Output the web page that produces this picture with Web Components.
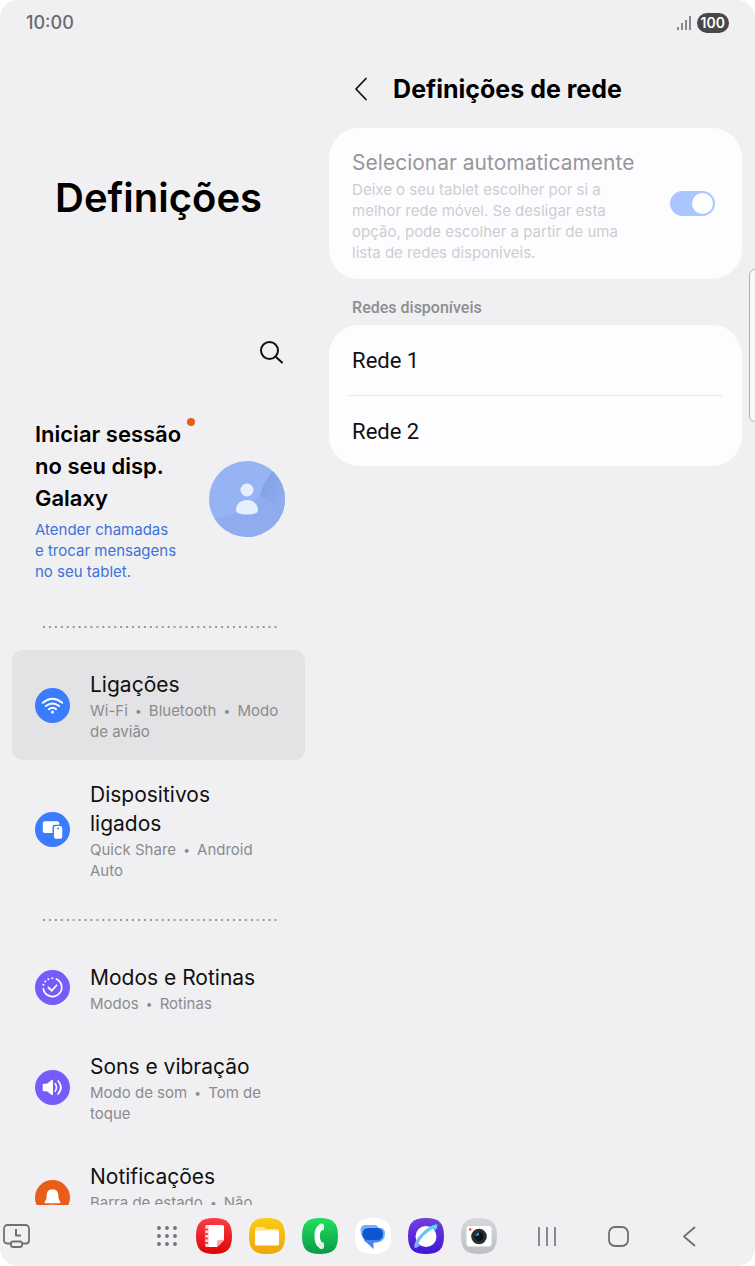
<!DOCTYPE html>
<html lang="pt">
<head>
    <meta charset="UTF-8">
    <meta name="viewport" content="width=device-width, initial-scale=1.0">
    <title>Definições de rede</title>
    <style>
        body{
            margin: 0;
            background-color: #fff;
            font-family: Inter, "Liberation Sans", sans-serif;
        }
    </style>
</head>
<body>

    <tablet-screen>
        <status-bar slot="status" level="100">10:00</status-bar>

        <settings-menu slot="menu" heading="Definições">
            <account-card>
                Iniciar sessão<br>no seu disp.<br>Galaxy
                <span slot="hint">Atender chamadas<br>e trocar mensagens<br>no seu tablet.</span>
            </account-card>
            <dotted-line></dotted-line>
            <menu-item icon="wifi" color="#3b7cff" active>
                Ligações
                <span slot="sub">Wi-Fi<bullet-mark></bullet-mark>Bluetooth<bullet-mark></bullet-mark>Modo<br>de avião</span>
            </menu-item>
            <menu-item icon="devices" color="#3b7cff">
                Dispositivos<br>ligados
                <span slot="sub">Quick Share<bullet-mark></bullet-mark>Android<br>Auto</span>
            </menu-item>
            <dotted-line></dotted-line>
            <menu-item icon="modes" color="#755cfb">
                Modos e Rotinas
                <span slot="sub">Modos<bullet-mark></bullet-mark>Rotinas</span>
            </menu-item>
            <menu-item icon="sound" color="#755cfb">
                Sons e vibração
                <span slot="sub">Modo de som<bullet-mark></bullet-mark>Tom de<br>toque</span>
            </menu-item>
            <menu-item icon="bell" color="#e85d17">
                Notificações
                <span slot="sub">Barra de estado<bullet-mark></bullet-mark>Não<br>incomodar</span>
            </menu-item>
        </settings-menu>

        <detail-pane slot="detail" heading="Definições de rede">
            <auto-select>
                Selecionar automaticamente
                <span slot="hint">Deixe o seu tablet escolher por si a<br>melhor rede móvel. Se desligar esta<br>opção, pode escolher a partir de uma<br>lista de redes disponíveis.</span>
            </auto-select>
            <network-list heading="Redes disponíveis">
                <network-row>Rede 1</network-row>
                <network-row>Rede 2</network-row>
            </network-list>
        </detail-pane>

        <task-bar slot="taskbar"></task-bar>
    </tablet-screen>

    <script>
        const icons = {
            wifi: `<svg viewBox="0 0 36 36" fill="none" stroke="#fff" stroke-width="2" stroke-linecap="round">
                <path d="M8 15.200Q18 7 28 15.200M11.200 18.600Q18 13.200 24.800 18.600M14.300 21.800Q18 19 21.700 21.800"/>
                <circle cx="18" cy="24.800" r="1.600" fill="#fff" stroke="none"/></svg>`,
            devices: `<svg viewBox="0 0 36 36" fill="#fff">
                <path d="M10 9.500h13a2 2 0 0 1 2 2v1.500h-4.500a2.500 2.500 0 0 0-2.500 2.500v6h-8a2 2 0 0 1-2-2v-8a2 2 0 0 1 2-2z"/>
                <rect x="19.500" y="14.500" width="8.500" height="13" rx="2"/><circle cx="23.700" cy="17" r="1" fill="#3b7cff"/></svg>`,
            modes: `<svg viewBox="0 0 36 36" fill="none" stroke="#fff" stroke-width="1.800" stroke-linecap="round">
                <path d="M22 9.200A9.500 9.500 0 1 1 8.600 19.500M13.800 18l3.400 3.300 5-5.600"/>
                <path d="M8.700 15.200v0M10.600 11.800v0M13.800 9.500v0M17.800 8.500v0" stroke-width="2.200"/></svg>`,
            sound: `<svg viewBox="0 0 36 36" fill="none" stroke="#fff" stroke-width="1.700" stroke-linecap="round">
                <path d="M8.700 14.800h4l5-4v14.400l-5-4h-4z" fill="#fff" stroke-linejoin="round" stroke-width="1.500"/>
                <path d="M20.800 14.200Q23.400 18 20.800 21.800"/><path d="M23.800 11.300Q29.600 18 23.800 24.700"/></svg>`,
            bell: `<svg viewBox="0 0 36 36" fill="#fff">
                <path d="M18 9.500c-4.200 0-6 3-6 6.500 0 4-1.300 5-2 6.500-.4 1 0 1.500 1 1.500h14c1 0 1.400-.5 1-1.500-.7-1.500-2-2.500-2-6.500 0-3.500-1.800-6.500-6-6.500z"/>
                <path d="M15 25.500h6q-.8 2.500-3 2.500t-3-2.500z"/></svg>`
        };

        // every component only differs in its template
        class BaseElement extends HTMLElement
        {
            connectedCallback()
            {
                if (this.shadowRoot) return;
                const shadow = this.attachShadow({mode:'open'})
                const template = document.createElement('template')
                template.innerHTML = `<style>*{box-sizing:border-box}</style>` + this.render()
                shadow.append(template.content.cloneNode(true))
            }
        }

        class TabletScreen extends BaseElement
        {
            render()
            {
                return `
                <style>
                    :host{
                        display: flex;
                        flex-direction: column;
                        height: 100vh;
                        overflow: hidden;
                        position: relative;
                        background-color: #f0f0f3;
                        border-radius: 18px;
                    }
                    .panes{
                        flex: 1;
                        min-height: 0;
                        overflow: hidden;
                        display: grid;
                        grid-template-columns: 42fr 58fr;
                    }
                    .handle{
                        position: absolute;
                        top: 269px;
                        right: -6px;
                        width: 12px;
                        height: 153px;
                        border: 1px solid #b4b4b8;
                        border-radius: 6px;
                        background-color: #f7f7f9;
                    }
                </style>
                <slot name="status"></slot>
                <div class="panes">
                    <slot name="menu"></slot>
                    <slot name="detail"></slot>
                </div>
                <slot name="taskbar"></slot>
                <div class="handle"></div>`;
            }
        }

        class StatusBar extends BaseElement
        {
            render()
            {
                return `
                <style>
                    :host{
                        display: flex;
                        align-items: center;
                        gap: 5px;
                        height: 45px;
                        padding: 0 26px;
                        font-size: 18px;
                        font-weight: 500;
                        color: #6a6a6c;
                    }
                    svg{ margin-left: auto; width: 15px; height: 16px; }
                    b{
                        padding: 0 4px;
                        border-radius: 10px;
                        background-color: #48484a;
                        color: #fff;
                        font-size: 14px;
                        font-weight: 600;
                        line-height: 20px;
                    }
                </style>
                <span><slot></slot></span>
                <svg viewBox="0 0 15 16" fill="#8a8a8c">
                    <rect x="0" y="12" width="2" height="3"/><rect x="4" y="8" width="2" height="7"/>
                    <rect x="8" y="5" width="2" height="10"/><rect x="12" y="1" width="2" height="14"/>
                </svg>
                <b>${this.getAttribute('level')}</b>`;
            }
        }

        class SettingsMenu extends BaseElement
        {
            render()
            {
                return `
                <style>
                    :host{ display: block; padding: 0 12px; }
                    h1{
                        margin: 0;
                        padding-top: 128px;
                        text-align: center;
                        font-size: 40px;
                        font-weight: 600;
                        line-height: 50px;
                    }
                    .tools{
                        display: flex;
                        justify-content: flex-end;
                        padding: 110px 15px 47px;
                    }
                    button{
                        padding: 5px;
                        border: 0;
                        background: none;
                        line-height: 0;
                    }
                    nav{ display: block; }
                </style>
                <h1>${this.getAttribute('heading')}</h1>
                <div class="tools">
                    <button aria-label="Pesquisar">
                        <svg width="28" height="28" viewBox="0 0 28 28" fill="none" stroke="#111" stroke-width="2" stroke-linecap="round">
                            <circle cx="12.500" cy="12.500" r="8.500"/><path d="M19 19l6 5.500"/>
                        </svg>
                    </button>
                </div>
                <nav><slot></slot></nav>`;
            }
        }

        class AccountCard extends BaseElement
        {
            render()
            {
                return `
                <style>
                    :host{
                        display: flex;
                        align-items: center;
                        justify-content: space-between;
                        padding: 0 20px 0 23px;
                    }
                    .text{ position: relative; }
                    .name{
                        font-size: 22px;
                        font-weight: 600;
                        line-height: 32px;
                    }
                    .hint{
                        padding-top: 5px;
                        font-size: 15px;
                        line-height: 21px;
                        color: #3d72d8;
                    }
                    .badge{
                        position: absolute;
                        top: 0;
                        right: -14px;
                        width: 8px;
                        height: 8px;
                        border-radius: 50%;
                        background-color: #e2601c;
                    }
                    svg{ flex: none; margin-bottom: 2px; }
                </style>
                <div class="text">
                    <div class="name"><slot></slot></div>
                    <div class="hint"><slot name="hint"></slot></div>
                    <i class="badge"></i>
                </div>
                <svg width="76" height="76" viewBox="0 0 76 76">
                    <defs>
                        <clipPath id="round"><circle cx="38" cy="38" r="38"/></clipPath>
                        <linearGradient id="fold" x1="0" y1="0" x2="1" y2="1">
                            <stop offset="0" stop-color="#7f9fe4"/><stop offset="1" stop-color="#92aff0"/>
                        </linearGradient>
                    </defs>
                    <g clip-path="url(#round)">
                        <rect width="76" height="76" fill="#96b4f3"/>
                        <path d="M0 58Q30 56 51 34L76 50V76H0z" fill="#8eacee"/>
                        <path d="M51 34Q55 20 64 10L76 14V52z" fill="url(#fold)"/>
                    </g>
                    <circle cx="38" cy="29" r="6.500" fill="#e6effe"/>
                    <path d="M27 49c0-6 5-10 11-10s11 4 11 10c0 3-4 4.500-11 4.500s-11-1.500-11-4.500z" fill="#e6effe"/>
                </svg>`;
            }
        }

        class DottedLine extends BaseElement
        {
            render()
            {
                return `
                <style>
                    :host{ display: block; padding: 20px 26px 22px 29px; }
                    :host(:first-of-type){ padding-top: 44px; }
                    div{
                        height: 2px;
                        background: radial-gradient(circle, #98989b 1px, transparent 1px) 0 0 / 6px 2px round;
                    }
                </style>
                <div></div>`;
            }
        }

        class BulletMark extends BaseElement
        {
            render()
            {
                return `
                <style>
                    :host{
                        display: inline-block;
                        width: 21px;
                        text-align: center;
                        font-size: 12px;
                        line-height: 1;
                        vertical-align: 1px;
                    }
                </style>•`;
            }
        }

        class MenuItem extends BaseElement
        {
            render()
            {
                return `
                <style>
                    :host{ display: block; }
                    a{
                        display: flex;
                        align-items: center;
                        gap: 20px;
                        padding: 18px 0 18px 23px;
                        border-radius: 10px;
                        color: #111;
                        text-decoration: none;
                        white-space: nowrap;
                    }
                    :host([active]) a{ background-color: #e3e3e5; }
                    .icon{
                        flex: none;
                        width: 35px;
                        height: 35px;
                        border-radius: 50%;
                        background-color: ${this.getAttribute('color')};
                    }
                    .icon svg{ display: block; }
                    .title{ padding-top: 2px; font-size: 21px; line-height: 29px; }
                    .sub{
                        padding-top: 1px;
                        font-size: 15px;
                        line-height: 21px;
                        color: #8b8b8e;
                    }
                </style>
                <a href="#${this.getAttribute('icon')}">
                    <span class="icon">${icons[this.getAttribute('icon')]}</span>
                    <div>
                        <div class="title"><slot></slot></div>
                        <div class="sub"><slot name="sub"></slot></div>
                    </div>
                </a>`;
            }
        }

        class DetailPane extends BaseElement
        {
            render()
            {
                return `
                <style>
                    :host{ display: block; padding: 0 13px 0 12px; }
                    header{
                        display: flex;
                        align-items: center;
                        gap: 20px;
                        padding: 28px 20px 23px;
                    }
                    button{
                        padding: 0;
                        border: 0;
                        background: none;
                        line-height: 0;
                    }
                    h2{
                        margin: 0;
                        font-size: 25px;
                        font-weight: 700;
                        line-height: 32px;
                    }
                </style>
                <header>
                    <button aria-label="Voltar">
                        <svg width="24" height="26" viewBox="0 0 24 26" fill="none" stroke="#111" stroke-width="1.800" stroke-linecap="round" stroke-linejoin="round">
                            <path d="M17 2.500L7 13l10 10.500"/>
                        </svg>
                    </button>
                    <h2>${this.getAttribute('heading')}</h2>
                </header>
                <slot></slot>`;
            }
        }

        class AutoSelect extends BaseElement
        {
            render()
            {
                return `
                <style>
                    :host{ display: block; }
                    label{
                        display: flex;
                        align-items: center;
                        justify-content: space-between;
                        padding: 16px 27px 16px 23px;
                        border-radius: 30px;
                        background-color: #fdfdff;
                    }
                    .title{
                        padding-top: 4px;
                        font-size: 21px;
                        line-height: 30px;
                        color: #97979a;
                    }
                    .hint{
                        padding-top: 1px;
                        font-size: 15px;
                        line-height: 21px;
                        color: #cdcdd0;
                    }
                    input{
                        appearance: none;
                        flex: none;
                        display: flex;
                        justify-content: flex-end;
                        width: 45px;
                        height: 25px;
                        margin: 0;
                        padding: 2px;
                        border-radius: 13px;
                        background-color: #abc6ff;
                    }
                    input::before{
                        content: '';
                        width: 21px;
                        height: 21px;
                        border-radius: 50%;
                        background-color: #fdfdff;
                    }
                </style>
                <label>
                    <span>
                        <div class="title"><slot></slot></div>
                        <div class="hint"><slot name="hint"></slot></div>
                    </span>
                    <input type="checkbox" role="switch" checked disabled>
                </label>`;
            }
        }

        class NetworkList extends BaseElement
        {
            render()
            {
                return `
                <style>
                    :host{ display: block; font-family: Roboto, sans-serif; }
                    h3{
                        margin: 0;
                        padding: 19px 23px 7px;
                        font-size: 16px;
                        font-weight: 500;
                        line-height: 20px;
                        color: #8d8d90;
                    }
                    .card{
                        padding: 0 20px;
                        border-radius: 30px;
                        background-color: #fdfdff;
                    }
                </style>
                <h3>${this.getAttribute('heading')}</h3>
                <div class="card"><slot></slot></div>`;
            }
        }

        class NetworkRow extends BaseElement
        {
            render()
            {
                return `
                <style>
                    :host{ display: block; }
                    :host(:not(:first-child)){ border-top: 1px solid #e4e4e6; }
                    button{
                        width: 100%;
                        padding: 21px 3px 19px;
                        border: 0;
                        background: none;
                        text-align: left;
                        font: 22px/30px Roboto, sans-serif;
                        color: #111;
                    }
                </style>
                <button><slot></slot></button>`;
            }
        }

        class TaskBar extends BaseElement
        {
            // app icons share the same rounded tile
            app(name, top, bottom, art)
            {
                const id = name.toLowerCase()
                return `
                <button aria-label="${name}">
                    <svg width="36" height="36" viewBox="0 0 36 36">
                        <defs><linearGradient id="${id}" x2="0" y2="1">
                            <stop stop-color="${top}"/><stop offset="1" stop-color="${bottom}"/>
                        </linearGradient></defs>
                        <path d="M18 0C31 0 36 5 36 18S31 36 18 36 0 31 0 18 5 0 18 0z" fill="url(#${id})"/>
                        ${art}
                    </svg>
                </button>`;
            }

            render()
            {
                return `
                <style>
                    :host{
                        display: flex;
                        align-items: center;
                        height: 61px;
                        padding: 0 48px 0 2px;
                    }
                    button{
                        padding: 0;
                        border: 0;
                        background: none;
                        line-height: 0;
                    }
                    .apps{ display: flex; gap: 17px; margin-left: auto; }
                    .keys{ display: flex; gap: 35px; margin-left: 32px; }
                </style>
                <button aria-label="Recentes">
                    <svg width="30" height="30" viewBox="0 0 30 30" fill="none" stroke="#707073" stroke-width="1.800" stroke-linejoin="round">
                        <path d="M9 22.500H5a3 3 0 0 1-3-3V7.500A3.500 3.500 0 0 1 5.500 4h18A3.500 3.500 0 0 1 27 7.500v12a3 3 0 0 1-3 3H20"/>
                        <path d="M14 8v6.500h5" stroke-width="2"/>
                        <rect x="9" y="20.500" width="11" height="5.500" rx="2"/>
                    </svg>
                </button>
                <div class="apps">
                    <button aria-label="Aplicações">
                        <svg width="24" height="36" viewBox="0 0 24 36" fill="#707073">
                            ${[10, 18, 26].map(y => [4, 12, 20].map(x => `<circle cx="${x}" cy="${y}" r="1.900"/>`).join('')).join('')}
                        </svg>
                    </button>
                    ${this.app('Notes', '#fb3f45', '#dc0508', `
                        <path d="M11 7h15.500q1.500 0 1.500 1.500v13.500L21 29H11q-1.500 0-1.500-1.500v-19Q9.500 7 11 7z" fill="#fff"/>
                        <path d="M11 7h2v22h-2q-1.500 0-1.500-1.500v-19Q9.500 7 11 7z" fill="#ffd9da"/>
                        <path d="M21 29v-5q0-2 2-2h5z" fill="#ffa4a7"/>
                        <path d="M9 11.500h2M9 16h2M9 20.500h2M9 25h2" stroke="#ee3a40" stroke-width="2.200" stroke-linecap="round"/>`)}
                    ${this.app('Files', '#fbcc14', '#efa508', `
                        <path d="M6 11q0-2 2-2h7l2 2h11q2 0 2 2v4H6z" fill="#ffe48c"/>
                        <rect x="6" y="12.500" width="24" height="15" rx="1.500" fill="#fff"/>`)}
                    ${this.app('Phone', '#21e05a', '#0a9a49', `
                        <path d="M19.500 6C14.500 7 12.500 12.500 12.500 18.200S14.500 29.500 19.500 30.500L19.500 24.500Q16 18.200 19.500 12z" fill="#fff"/>
                        <rect x="17" y="5.500" width="5" height="7" rx="2" fill="#e3f9ea"/>
                        <rect x="17" y="24" width="5" height="7" rx="2" fill="#d8f2e2"/>`)}
                    ${this.app('Messages', '#ffffff', '#ffffff', `
                        <path d="M10.500 7H19q4 0 5 3.500L8 20q-2.500-3-2.500-7.500 0-5.500 5-5.500z" fill="#79aefc"/>
                        <path d="M21 10h4q5 0 5 5.500 0 8.500-8 9L14 24l12-4z" fill="#79aefc"/>
                        <path d="M8 19.500h19q-2 5-8 5h-.5V31l-6.500-6q-3-1.500-4-5.500z" fill="#4b86ed"/>
                        <rect x="7.500" y="10" width="20.500" height="12" rx="5.500" fill="#0b57d0"/>`)}
                    ${this.app('Internet', '#7141dc', '#4316d4', `
                        <defs><linearGradient id="ring" x1="1" y1="0" x2="0" y2="1">
                            <stop stop-color="#4fdff3"/><stop offset="1" stop-color="#8fa6fb"/>
                        </linearGradient></defs>
                        <circle cx="18" cy="18.500" r="10.500" fill="#fff"/>
                        <path d="M29 6.200Q30.500 8.500 26.800 13Q26.500 10 24.500 11Q14.500 17 10.500 25Q10 27.500 12.500 27Q8 31 6.300 29.500Q5.500 24 13.500 15.500Q22 6.500 29 6.200z" fill="url(#ring)"/>`)}
                    ${this.app('Camera', '#d6d8dc', '#bbbec4', `
                        <rect x="5.500" y="8" width="25" height="20.500" rx="3" fill="#fff"/>
                        <circle cx="18" cy="18.500" r="7.800" fill="#2b2d2f"/><circle cx="18" cy="18.500" r="4.500" fill="#0c1420"/>
                        <path d="M14.500 18a3.500 3.500 0 0 1 3.500-3.500v3z" fill="#2f93b8"/><circle cx="9.200" cy="11.500" r="1.200" fill="#e33"/>`)}
                </div>
                <div class="keys">
                    <button aria-label="Multitarefa">
                        <svg width="36" height="36" viewBox="0 0 36 36" stroke="#707073" stroke-width="1.600">
                            <path d="M10 9v19M18 9v19M26 9v19"/>
                        </svg>
                    </button>
                    <button aria-label="Início">
                        <svg width="36" height="36" viewBox="0 0 36 36" fill="none" stroke="#707073" stroke-width="1.800">
                            <rect x="9" y="9" width="19" height="19" rx="6"/>
                        </svg>
                    </button>
                    <button aria-label="Voltar">
                        <svg width="36" height="36" viewBox="0 0 36 36" fill="none" stroke="#707073" stroke-width="1.800" stroke-linejoin="round">
                            <path d="M24 9L13 18.500 24 28"/>
                        </svg>
                    </button>
                </div>`;
            }
        }

        customElements.define('tablet-screen',TabletScreen);
        customElements.define('status-bar',StatusBar);
        customElements.define('settings-menu',SettingsMenu);
        customElements.define('account-card',AccountCard);
        customElements.define('dotted-line',DottedLine);
        customElements.define('bullet-mark',BulletMark);
        customElements.define('menu-item',MenuItem);
        customElements.define('detail-pane',DetailPane);
        customElements.define('auto-select',AutoSelect);
        customElements.define('network-list',NetworkList);
        customElements.define('network-row',NetworkRow);
        customElements.define('task-bar',TaskBar);
    </script>
</body>
</html>
